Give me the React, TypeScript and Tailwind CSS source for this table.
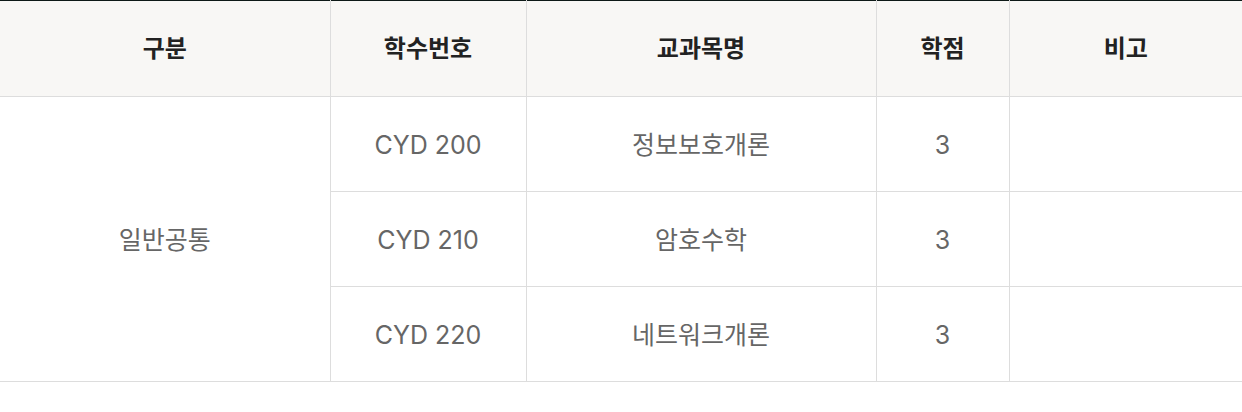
import React from 'react';

const courses = [
  { code: 'CYD 200', name: '정보보호개론', credit: 3 },
  { code: 'CYD 210', name: '암호수학', credit: 3 },
  { code: 'CYD 220', name: '네트워크개론', credit: 3 },
];

const font = { fontFamily: 'Inter, "Noto Sans CJK KR", sans-serif' };

export default function App() {
  return (
    <div className="w-[1242px] h-[412px] bg-white" style={font}>
      <table className="w-full border-collapse table-fixed border-t border-t-[#0d1917]">
        <colgroup>
          <col className="w-[330px]" />
          <col className="w-[196px]" />
          <col className="w-[350px]" />
          <col className="w-[133px]" />
          <col />
        </colgroup>
        <thead>
          <tr className="h-[96px] bg-[#f8f7f5] border-b border-[#dddddd]">
            {['구분', '학수번호', '교과목명', '학점', '비고'].map((h, i) => (
              <th
                key={h}
                className={`text-[24px] font-bold text-[#222] ${i > 0 ? 'border-l border-[#dddddd]' : ''}`}
              >
                {h}
              </th>
            ))}
          </tr>
        </thead>
        <tbody>
          {courses.map((c, idx) => (
            <tr key={c.code} className="h-[95px] border-b border-[#dddddd] text-[25px] text-[#666] text-center">
              {idx === 0 && (
                <td rowSpan={courses.length} className="border-r border-[#dddddd] pt-[4px]">
                  일반공통
                </td>
              )}
              <td className="border-r border-[#dddddd] pt-[4px]">{c.code}</td>
              <td className="border-r border-[#dddddd] pt-[4px]">{c.name}</td>
              <td className="border-r border-[#dddddd] pt-[4px]">{c.credit}</td>
              <td></td>
            </tr>
          ))}
        </tbody>
      </table>
    </div>
  );
}
